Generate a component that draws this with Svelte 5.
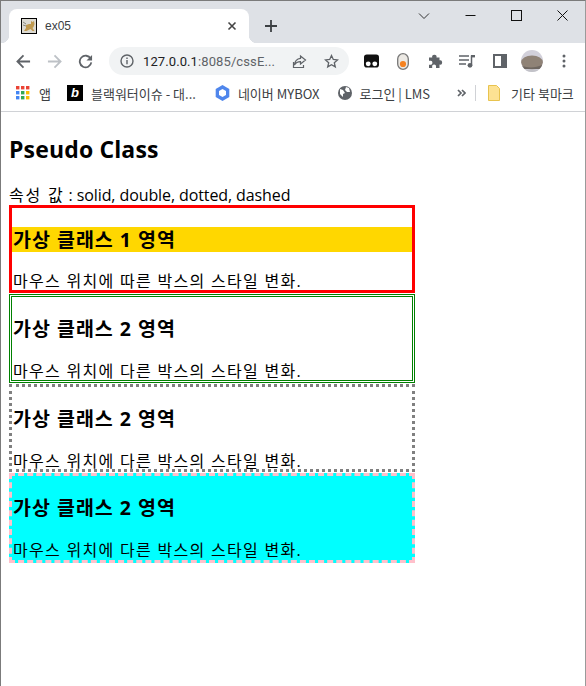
<script>
  const boxes = [
    { cls: 'b1', title: '가상 클래스 1 영역', text: '마우스 위치에 따른 박스의 스타일 변화.' },
    { cls: 'b2', title: '가상 클래스 2 영역', text: '마우스 위치에 다른 박스의 스타일 변화.' },
    { cls: 'b3', title: '가상 클래스 2 영역', text: '마우스 위치에 다른 박스의 스타일 변화.' },
    { cls: 'b4', title: '가상 클래스 2 영역', text: '마우스 위치에 다른 박스의 스타일 변화.' }
  ];
</script>

<div class="window">
  <div class="tabstrip">
    <div class="tab">
      <svg class="favicon" width="16" height="16" viewBox="0 0 16 16">
        <rect x=".5" y=".5" width="15" height="15" fill="#dcdad2" stroke="#000"/>
        <path d="M3 13l2-3 0-3 3-1 2 0 0-3 1.500 1 1.500-1 .5 3-1 3-1 1 2 3-2 0-2-2-2 1-2 1z" fill="#c09a50"/>
        <path d="M2 4l3 2M2 7l3 1" stroke="#8a8a80" fill="none"/>
      </svg>
      <span class="tabtitle">ex05</span>
      <svg class="tabclose" width="10" height="10" viewBox="0 0 10 10"><path d="M1.500 1.500l7 7M8.500 1.500l-7 7" stroke="#444" stroke-width="1.600"/></svg>
    </div>
    <svg class="plus" width="14" height="14" viewBox="0 0 14 14"><path d="M7 1v12M1 7h12" stroke="#3c4043" stroke-width="1.800"/></svg>
    <div class="winctl">
      <svg class="c1" width="12" height="8" viewBox="0 0 12 8"><path d="M1 1.500l5 5 5-5" fill="none" stroke="#333" stroke-width="1"/></svg>
      <svg class="c2" width="11" height="11" viewBox="0 0 11 11"><path d="M.5 5.500h10" stroke="#111" stroke-width="1"/></svg>
      <svg class="c3" width="11" height="11" viewBox="0 0 11 11"><rect x=".5" y=".5" width="10" height="10" fill="none" stroke="#111"/></svg>
      <svg class="c4" width="11" height="11" viewBox="0 0 11 11"><path d="M.5 .5l10 10M10.500 .5l-10 10" stroke="#111"/></svg>
    </div>
  </div>

  <div class="toolbar">
    <svg class="nav" width="15" height="15" viewBox="0 0 16 16"><path d="M15 8H2M8 1.500L1.500 8 8 14.500" fill="none" stroke="#5f6368" stroke-width="1.900"/></svg>
    <svg class="nav" width="15" height="15" viewBox="0 0 16 16"><path d="M1 8h13M8 1.500L14.500 8 8 14.500" fill="none" stroke="#bdc1c6" stroke-width="1.900"/></svg>
    <svg class="nav" width="15" height="15" viewBox="0 0 16 16"><path d="M13.500 5A6.200 6.200 0 1 0 14.200 9" fill="none" stroke="#5f6368" stroke-width="1.900"/><path d="M15 1v6H9z" fill="#5f6368"/></svg>
    <div class="omni">
      <svg width="14" height="14" viewBox="0 0 14 14"><circle cx="7" cy="7" r="6" fill="none" stroke="#5f6368" stroke-width="1.400"/><path d="M7 6v4.200M7 3.600v1.400" stroke="#5f6368" stroke-width="1.400"/></svg>
      <span class="url"><b>127.0.0.1</b>:8085/cssE...</span>
      <svg class="share" width="15" height="15" viewBox="0 0 15 15"><path d="M1.500 8v5.500h10V11M8.500 2l5 4-5 4V7.700C5.500 7.700 3.800 8.500 2.500 11 2.800 7.500 5 4.800 8.500 4.400z" fill="none" stroke="#5f6368" stroke-width="1.200"/></svg>
      <svg class="star" width="15" height="15" viewBox="0 0 15 15"><path d="M7.500 1.500l1.800 4 4.200.4-3.200 2.800 1 4.200-3.800-2.200-3.800 2.200 1-4.200L1.500 5.900l4.200-.4z" fill="none" stroke="#5f6368" stroke-width="1.300"/></svg>
    </div>
    <div class="exts">
      <svg class="e1" width="15" height="14" viewBox="0 0 16 14"><path d="M3 0h10a3 3 0 0 1 3 3v8a3 3 0 0 1-3 3H3a3 3 0 0 1-3-3V3a3 3 0 0 1 3-3z" fill="#111"/><circle cx="4.500" cy="10" r="2.600" fill="#fff"/><circle cx="11.500" cy="10" r="2.600" fill="#fff"/></svg>
      <svg class="e2" width="12" height="17" viewBox="0 0 12 17"><rect x=".7" y=".7" width="10.600" height="15.600" rx="5.300" fill="#ece9e4" stroke="#777" stroke-width="1.300"/><circle cx="6" cy="11" r="3.100" fill="#f58220"/></svg>
      <svg class="e3" width="15" height="14" viewBox="0 0 15 14"><path d="M1 3.500h3.200a2.200 2.200 0 1 1 4.300 0H11.500v2.800a2.200 2.200 0 1 1 0 4.300V14H8v-1a2 2 0 1 0-3.800 0v1H1v-3.300h1a2 2 0 1 0 0-3.900H1z" fill="#5f6368"/></svg>
      <svg class="e4" width="16" height="14" viewBox="0 0 16 14"><path d="M0 2h10M0 6h10M0 10h7" stroke="#5f6368" stroke-width="1.300"/><path d="M12.500 1.500v9.500" stroke="#5f6368" stroke-width="1.500"/><circle cx="11" cy="11.300" r="2.400" fill="#5f6368"/><path d="M12 1h4v2.400h-4z" fill="#5f6368"/></svg>
      <svg class="e5" width="14" height="14" viewBox="0 0 14 14"><path d="M0 0h14v14H0zM2 2v10h6V2z" fill="#5f6368" fill-rule="evenodd"/></svg>
      <svg class="e6" width="22" height="22" viewBox="0 0 22 22"><defs><clipPath id="av"><circle cx="11" cy="11" r="11"/></clipPath></defs><g clip-path="url(#av)"><rect width="22" height="22" fill="#d2d0da"/><ellipse cx="11" cy="12.500" rx="11" ry="7" fill="#8f8276"/><path d="M1 16c6 2 14 2 20-1v4H1z" fill="#6e6660"/><rect y="19.500" width="22" height="3" fill="#c2c2c8"/></g></svg>
      <svg class="e7" width="4" height="14" viewBox="0 0 4 14"><circle cx="2" cy="2" r="1.500" fill="#5f6368"/><circle cx="2" cy="7" r="1.500" fill="#5f6368"/><circle cx="2" cy="12" r="1.500" fill="#5f6368"/></svg>
    </div>
  </div>

  <div class="bookmarks">
    <span class="bm apps">
      <svg width="14" height="14" viewBox="0 0 14 14">
        {#each [0,5,10] as y, r}{#each [0,5,10] as x, c}
          <rect {x} {y} width="3.400" height="3.400" fill={['#ea4335','#ea4335','#ea4335','#4285f4','#34a853','#fbbc04','#4285f4','#34a853','#fbbc04'][r*3+c]}/>
        {/each}{/each}
      </svg>앱</span>
    <span class="bm blk"><span class="blogo">b</span>블랙워터이슈 - 대...</span>
    <span class="bm mybox">
      <svg width="15" height="16" viewBox="0 0 15 16"><path d="M7.500 0l6.800 4v8l-6.800 4L.7 12V4z" fill="#4f86ec"/><path d="M7.500 4l3.500 2v4l-3.500 2L4 10V6z" fill="#fff"/></svg>네이버 MYBOX</span>
    <span class="bm">
      <svg width="14" height="14" viewBox="0 0 14 14"><circle cx="7" cy="7" r="7" fill="#5f6368"/><path d="M2 3l3 1 2 3-2 1 0 3-3-3zM8 1l3 1 1 4-3 0-2-2z" fill="#fff"/></svg>로그인 | LMS</span>
    <svg class="more" width="9" height="8" viewBox="0 0 9 8"><path d="M1 1l3 3-3 3M5 1l3 3-3 3" fill="none" stroke="#5f6368" stroke-width="1.700"/></svg>
    <span class="sep"></span>
    <span class="bm other">
      <svg width="12" height="16" viewBox="0 0 12 16"><path d="M.5.500h8l3 3v12H.5z" fill="#fde293" stroke="#e8c34e"/></svg>기타 북마크</span>
  </div>

  <main class="page">
    <h2>Pseudo Class</h2>
    <p class="lead"><span class="ko">속성 값</span> : solid, double, dotted, dashed</p>
    {#each boxes as box}
      <section class="box {box.cls}">
        <h3>{box.title}</h3>
        <p>{box.text}</p>
      </section>
    {/each}
  </main>
</div>

<style>
  :global(body) { margin: 0; background: #fff; }
  .window {
    box-sizing: border-box;
    width: 586px;
    height: 686px;
    border: 1px solid #7b7b7b;
    border-bottom: 0;
    border-right-color: #9a9a9a;
    font-family: "Open Sans", "Noto Sans CJK KR", sans-serif;
    color: #000;
    overflow: hidden;
  }
  .tabstrip {
    height: 42px;
    background: #dee1e6;
    display: flex;
    align-items: flex-end;
    padding-left: 8px;
    position: relative;
  }
  .tab {
    box-sizing: border-box;
    width: 240px;
    height: 34px;
    background: #fff;
    border-radius: 8px 8px 0 0;
    display: flex;
    align-items: center;
    padding: 0 12px;
    gap: 8px;
    position: relative;
  }
  .tab::before, .tab::after {
    content: "";
    position: absolute;
    bottom: 0;
    width: 8px;
    height: 8px;
  }
  .tab::before { left: -8px; background: radial-gradient(circle at 0 0, transparent 8px, #fff 8.5px); }
  .tab::after { right: -8px; background: radial-gradient(circle at 100% 0, transparent 8px, #fff 8.5px); }
  .favicon { flex: none; }
  .tabtitle { font-size: 12px; color: #3c4043; flex: 1; font-family: "Liberation Sans", sans-serif; }
  .plus { margin: 0 0 10px 15px; }
  .winctl { position: absolute; inset: 0; pointer-events: none; }
  .winctl svg { position: absolute; }
  .c1 { left: 417px; top: 11px; }
  .c2 { left: 464px; top: 9px; }
  .c3 { left: 510px; top: 9px; }
  .c4 { left: 556px; top: 9px; }
  .toolbar {
    height: 32px;
    box-sizing: border-box;
    padding: 4px 0 0 15px;
    display: flex;
    align-items: center;
    background: #fff;
    gap: 16px;
  }
  .omni {
    flex: none;
    width: 240px;
    height: 28px;
    box-sizing: border-box;
    border-radius: 14px;
    background: #f1f3f4;
    display: flex;
    align-items: center;
    padding: 0 10px 0 11px;
  }
  .url { font-size: 13px; letter-spacing: .1px; color: #5f6368; margin-left: 9px; font-family: "Roboto", sans-serif; flex: 1; white-space: nowrap; }
  .url b { font-weight: 400; color: #202124; }
  .share { margin-right: 17px; }
  .exts { display: flex; align-items: center; margin-left: -1px; }
  .e2 { margin-left: 18px; }
  .e3 { margin-left: 19px; }
  .e4 { margin-left: 16px; }
  .e5 { margin-left: 18px; }
  .e6 { margin-left: 14px; }
  .e7 { margin-left: 19px; }
  .bookmarks {
    height: 36px;
    border-bottom: 1px solid #d0d2d6;
    display: flex;
    align-items: center;
    padding-left: 15px;
    font-size: 13px;
    color: #3c4043;
    font-family: "Noto Sans CJK KR", "Open Sans", sans-serif;
    white-space: nowrap;
  }
  .bm { display: flex; align-items: center; gap: 8px; }
  .apps { gap: 9px; margin-right: 16px; }
  .blk { margin-right: 19px; }
  .mybox { margin-right: 18px; }
  .blogo {
    width: 16px; height: 16px; background: #000; color: #fff;
    font: italic bold 13px/16px "Liberation Sans", sans-serif;
    text-align: center; display: block;
  }
  .more { margin-left: 27px; }
  .sep { width: 1px; height: 16px; background: #d0d2d6; margin: 0 12px 0 9px; }
  .other { gap: 11px; }
  .page { padding: 0 8px; }
  h2 { font-size: 23px; letter-spacing: .15px; line-height: 30px; margin: 22px 0 21px; font-weight: 700; }
  .lead { margin: 0 0 -.3px; font-size: 16px; line-height: 20px; letter-spacing: -.1px; }
  .ko { letter-spacing: 1.800px; }
  .box { box-sizing: border-box; width: 406px; margin-bottom: 1px; height: 88.600px; overflow: hidden; }
  .box h3 { font-size: 19.500px; letter-spacing: 1px; line-height: 25px; margin: 19px 0 18.720px; padding-left: 1px; font-weight: 700; }
  .box p { margin: 0; padding-left: 1px; font-size: 16px; line-height: 22px; letter-spacing: 1.300px; white-space: nowrap; }
  .b1 { border: 3px solid red; }
  .b1 h3 { background: gold; }
  .b2 { border: 3px double green; }
  .b3 { border: 3px dotted gray; }
  .b4 { border: 3px dashed pink; background: cyan; height: 89.400px; }
</style>
